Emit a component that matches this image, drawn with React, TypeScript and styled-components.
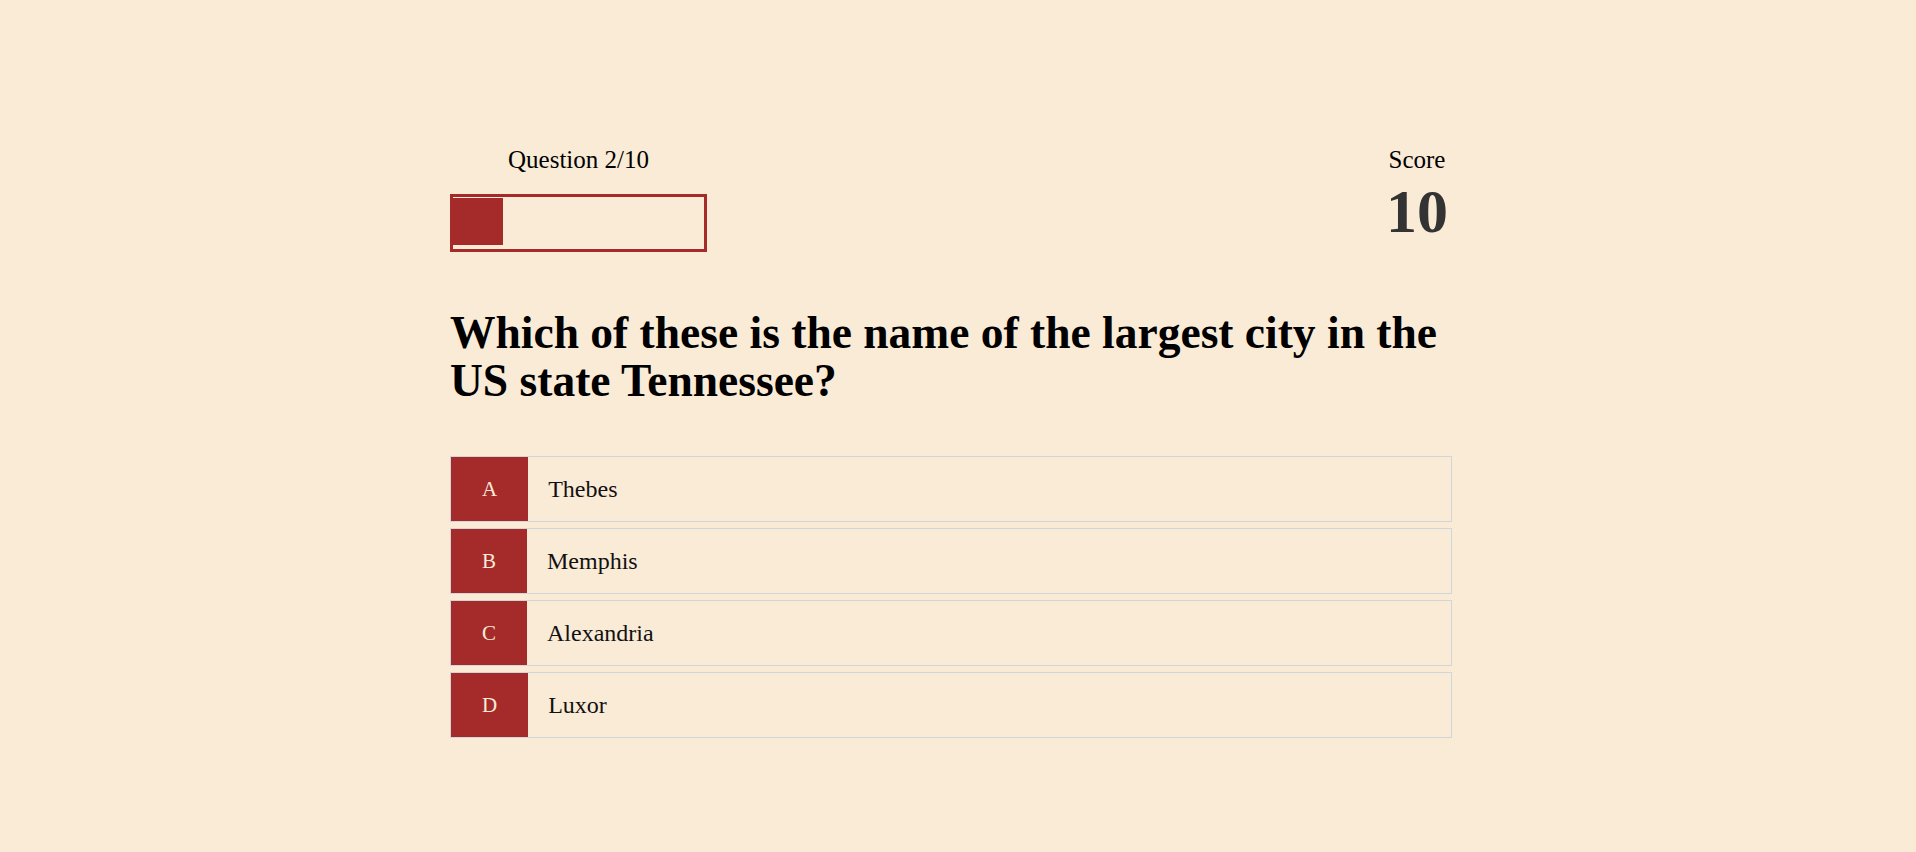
import React from "react";
import styled, { createGlobalStyle } from "styled-components";

const GlobalStyle = createGlobalStyle`
  html, body {
    margin: 0;
    padding: 0;
    background: antiquewhite;
  }
  body {
    font-family: "Liberation Serif", "DejaVu Serif", serif;
    color: #000;
  }
  * { box-sizing: border-box; }
`;

const Page = styled.div`
  min-height: 902px;
  padding: 145px 16px 0 0;
`;

const Container = styled.main`
  width: 1000px;
  margin: 0 auto;
`;

const Header = styled.header`
  display: flex;
  justify-content: space-between;
  align-items: flex-start;
`;

const ProgressBlock = styled.div`
  display: flex;
  flex-direction: column;
  align-items: center;
  width: 257px;
`;

const Label = styled.div`
  font-size: 25px;
  line-height: 29px;
`;

const Track = styled.div`
  margin-top: 20px;
  width: 257px;
  height: 58px;
  border: 3px solid brown;
  align-self: stretch;
`;

const Fill = styled.div`
  margin-top: 1px;
  height: 47px;
  background: brown;
`;

const ScoreBlock = styled.div`
  display: flex;
  flex-direction: column;
  align-items: center;
  margin-right: 2px;
`;

const ScoreValue = styled.div`
  margin-top: 6px;
  font-size: 62px;
  line-height: 62px;
  font-weight: bold;
  color: #333;
`;

const Question = styled.h1`
  margin: 57px 0 51px;
  font-size: 45.5px;
  line-height: 48px;
  font-weight: bold;
  color: #000;
`;

const Options = styled.ul`
  list-style: none;
  margin: 0;
  padding: 0;
  width: 1002px;
  display: flex;
  flex-direction: column;
  gap: 6px;
`;

const Option = styled.li`
  display: flex;
  align-items: stretch;
  height: 66px;
  border: 1px solid #cfd5d9;
  cursor: pointer;
`;

const Letter = styled.span`
  display: flex;
  align-items: center;
  justify-content: center;
  padding: 0 31px;
  background: brown;
  color: antiquewhite;
  font-size: 21px;
`;

const Answer = styled.span`
  display: flex;
  align-items: center;
  margin-left: 20px;
  font-size: 24px;
  color: #111;
`;

const answers = [
  { letter: "A", text: "Thebes" },
  { letter: "B", text: "Memphis" },
  { letter: "C", text: "Alexandria" },
  { letter: "D", text: "Luxor" },
];

export default function App() {
  const current = 2;
  const total = 10;
  return (
    <Page>
      <GlobalStyle />
      <Container>
        <Header>
          <ProgressBlock>
            <Label>
              Question {current}/{total}
            </Label>
            <Track>
              <Fill style={{ width: `${(current / total) * 100}%` }} />
            </Track>
          </ProgressBlock>
          <ScoreBlock>
            <Label>Score</Label>
            <ScoreValue>10</ScoreValue>
          </ScoreBlock>
        </Header>
        <Question>
          Which of these is the name of the largest city in the US state Tennessee?
        </Question>
        <Options>
          {answers.map((a) => (
            <Option key={a.letter}>
              <Letter>{a.letter}</Letter>
              <Answer>{a.text}</Answer>
            </Option>
          ))}
        </Options>
      </Container>
    </Page>
  );
}
